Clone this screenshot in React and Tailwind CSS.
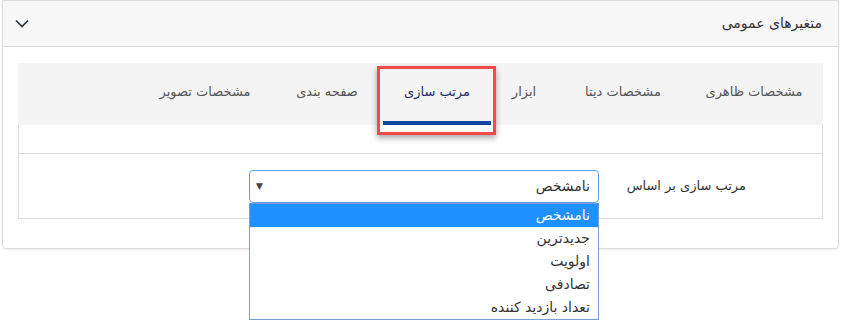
import React from "react";

const tabs = [
  { label: "مشخصات ظاهری", w: "w-[130px]" },
  { label: "مشخصات دیتا", w: "w-[132px]" },
  { label: "ابزار", w: "w-[66px]" },
  { label: "مرتب سازی", w: "w-[108px]", active: true },
  { label: "صفحه بندی", w: "w-[112px]" },
  { label: "مشخصات تصویر", w: "w-[132px]" },
];

const options = ["نامشخص", "جدیدترین", "اولویت", "تصادفی", "تعداد بازدید کننده"];

export default function App() {
  return (
    <div dir="rtl" className="bg-white w-[842px] h-[325px] font-['DejaVu_Sans',sans-serif] text-[#333]">
      <div className="ml-[2px] mr-[3px] border border-[#dcdcdc] rounded-b-[4px] shadow-[0_1px_2px_rgba(0,0,0,0.08)]">
        <div className="h-[46px] bg-[#f7f7f7] border-b border-[#dcdcdc] flex items-center justify-between pr-[16px] pl-[12px]">
          <span className="text-[14px] text-[#333]">متغیرهای عمومی</span>
          <svg width="14" height="9" viewBox="0 0 14 9" fill="none">
            <path d="M1 1.5 L7 7.5 L13 1.5" stroke="#2d3440" strokeWidth="1.7" />
          </svg>
        </div>
        <div className="pt-[16px] px-[15px] pb-[29px]">
          <div className="h-[62px] bg-[#f4f4f4] flex pr-[4px]">
            {tabs.map((t) => (
              <div key={t.label} className={`${t.w} relative flex items-center justify-center`}>
                <span className={`text-[13px] -mt-[4px] ${t.active ? "text-[#1c2a6e]" : "text-[#555]"}`}>{t.label}</span>
                {t.active && (
                  <>
                    <div className="absolute left-0 right-0 bottom-0 h-[4px] bg-[#0f46a0]" />
                    <div className="absolute -left-[6px] -right-[5px] top-[3px] -bottom-[10px] border-[3px] border-[#f04a4c] shadow-[0_3px_6px_rgba(0,0,0,0.35)] z-10" />
                  </>
                )}
              </div>
            ))}
          </div>
          <div className="border-x border-b border-[#dcdcdc]">
            <div className="h-[29px] border-b border-[#dcdcdc]" />
            <div className="h-[64px] flex items-center">
              <div className="w-[223px] pr-[76px] text-[13px] text-[#333]">مرتب سازی بر اساس</div>
              <div className="relative w-[350px] mt-[1px]">
                <div className="h-[33px] border border-[#5ba3e8] rounded-[4px] flex items-center justify-between pr-[8px] pl-[6px] bg-white">
                  <span className="text-[14px] text-[#333]">نامشخص</span>
                  <span className="text-[9px] text-[#444]">▼</span>
                </div>
                <div className="absolute top-[33px] left-0 right-0 border border-[#7d9dd3] bg-white z-20">
                  {options.map((o, i) => (
                    <div
                      key={o}
                      className={`h-[23px] flex items-center pr-[8px] text-[14px] ${i === 0 ? "bg-[#1e90ff] text-white" : "text-[#333]"}`}
                    >
                      {o}
                    </div>
                  ))}
                </div>
              </div>
            </div>
          </div>
        </div>
      </div>
    </div>
  );
}
